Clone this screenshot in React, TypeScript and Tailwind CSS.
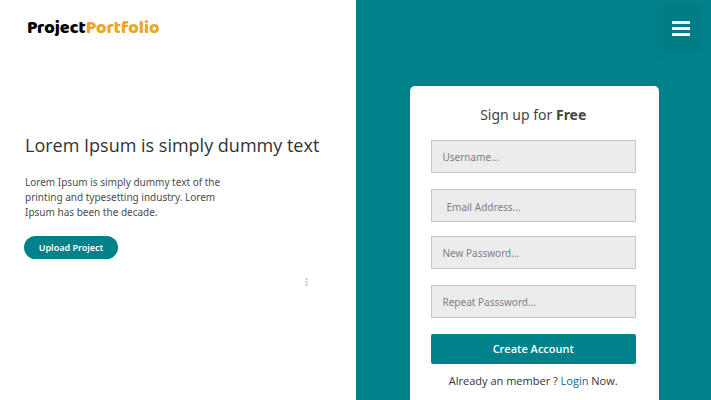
import React from "react";

type FieldProps = {
  id: string;
  label: string;
  type: string;
  className?: string;
};

function Field({ id, label, type, className = "pl-[11px]" }: FieldProps) {
  return (
    <div className="flex">
      <input
        id={id}
        type={type}
        aria-label={label}
        placeholder={label}
        className={`h-[33px] w-full border border-[#c6c6c6] bg-[#ececec] pr-3 text-[10px] leading-5 text-[#444] outline-none placeholder:text-[#808080] placeholder:opacity-100 ${className}`}
      />
    </div>
  );
}

function Intro() {
  return (
    <section className="flex flex-col bg-white">
      <header className="flex h-14 items-center pl-[27px]">
        <a href="#" className="font-['Baloo_2',Lato,sans-serif] text-[18px] leading-6 font-black text-black">
          Project<span className="text-[#e8a82c]">Portfolio</span>
        </a>
      </header>
      <div className="mt-[75px] flex flex-col items-start pl-[25px]">
        <h1 className="font-['Open_Sans',sans-serif] text-[18px] leading-7 font-medium whitespace-nowrap text-[#333]">
          Lorem Ipsum is simply dummy text
        </h1>
        <p className="mt-4 w-[215px] text-[10px] leading-[15px] text-[#4c4c4c]">
          Lorem Ipsum is simply dummy text of the printing and typesetting industry. Lorem Ipsum has been the decade.
        </p>
        <button className="mt-4 -ml-px h-[23px] w-[94px] rounded-full bg-[#00828a] text-[9px] leading-4 font-semibold text-white">
          Upload Project
        </button>
      </div>
      <div className="mt-[19px] mr-12 flex flex-col items-end">
        <div className="flex w-[3px] flex-col gap-px">
          <span className="h-[2px] rounded-full bg-[#d0d0d0]" />
          <span className="h-[2px] rounded-full bg-[#d0d0d0]" />
          <span className="h-[2px] rounded-full bg-[#d0d0d0]" />
        </div>
      </div>
    </section>
  );
}

function SignUp() {
  return (
    <section className="flex flex-col bg-[#00828a]">
      <div className="flex h-14 items-center justify-end pr-3">
        <button
          aria-label="Menu"
          className="flex h-9 w-9 flex-col items-center justify-center gap-[3px] bg-[#007c85] shadow-[0_0_8px_4px_#007c85]"
        >
          <span className="h-[3px] w-[18px] bg-white" />
          <span className="h-[3px] w-[18px] bg-white" />
          <span className="h-[3px] w-[18px] bg-white" />
        </button>
      </div>
      <form className="mt-[30px] mr-[52px] ml-[54px] flex flex-1 flex-col rounded-t-[5px] bg-white pt-[15px] pr-[23px] pl-[21px]">
        <h2 className="text-center text-[14px] leading-7 text-[#444]">
          Sign up for <b className="font-bold">Free</b>
        </h2>
        <div className="mt-[11px] flex flex-col gap-4">
          <Field id="username" label="Username..." type="text" />
          <div className="flex flex-col gap-[14px]">
            <Field id="email" label="Email Address..." type="email" className="pt-[3px] pl-[15px]" />
            <Field id="password" label="New Password..." type="password" />
          </div>
          <Field id="repeat" label="Repeat Passsword..." type="password" />
          <button
            type="button"
            className="h-[30px] rounded-[2px] bg-[#00828a] font-['Open_Sans',sans-serif] text-[11px] leading-4 font-semibold text-white"
          >
            Create Account
          </button>
        </div>
        <p className="mt-[9px] text-center font-['Open_Sans',sans-serif] text-[11px] leading-4 whitespace-nowrap text-[#333]">
          Already an member ?{" "}
          <a href="#" className="text-[#20608f]">
            Login
          </a>{" "}
          Now.
        </p>
      </form>
    </section>
  );
}

export default function App() {
  return (
    <main className="grid min-h-screen grid-cols-2 font-['Noto_Sans','Open_Sans',sans-serif]">
      <Intro />
      <SignUp />
    </main>
  );
}
